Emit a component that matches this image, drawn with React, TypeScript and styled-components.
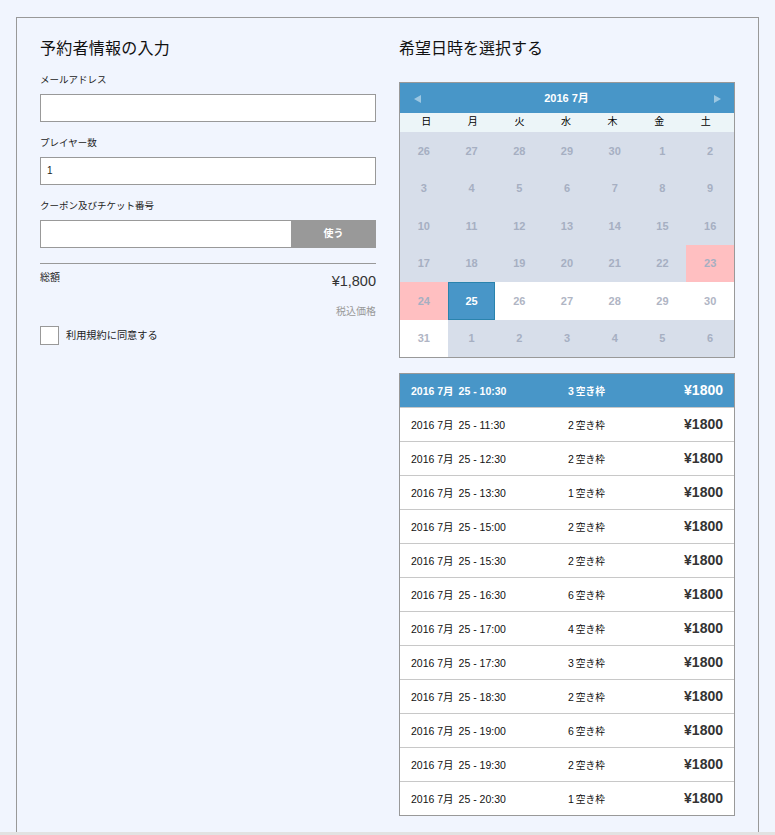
import React from "react";
import styled, { createGlobalStyle } from "styled-components";

const Global = createGlobalStyle`
  html, body { margin: 0; padding: 0; height: 835px; overflow: hidden; background: #f1f5fe; }
  body { font-family: "Liberation Sans", "Noto Sans CJK JP", sans-serif; color: #000; }
  * { box-sizing: border-box; }
`;
const Page = styled.div`
  height: 835px; display: flex; flex-direction: column; padding-top: 17px;
`;
const Frame = styled.main`
  width: 743px; height: 815px; margin-left: 16px; flex: none;
  border: 1px solid #999; border-bottom: 0;
  padding: 0 23px 0 23px;
  display: grid; grid-template-columns: 336px 336px; column-gap: 23px;
`;
const Strip = styled.div`
  height: 3px; background: #e2e2e2; flex: none;
`;
const Column = styled.section`
  display: flex; flex-direction: column; align-items: stretch;
`;
const Heading = styled.h2`
  margin: 0; font-weight: 400; font-size: 16px; line-height: 20px; padding-top: 21px; height: 64px; color: #111;
`;
const LeftHeading = styled(Heading)`
  height: 54px; letter-spacing: 0.25px;
`;
const Label = styled.label`
  display: block; font-size: 9.5px; line-height: 14px; padding-top: 1px; color: #222; height: 22px;
`;
const Field = styled.div`
  height: 28px; border: 1px solid #999; background: #fff; font-size: 10px; line-height: 26px; padding-left: 6px; margin-bottom: 13px; color: #222;
`;
const CouponRow = styled.div`
  display: flex; height: 28px; border: 1px solid #999; border-right: 0; background: #fff;
`;
const CouponInput = styled.div`
  flex: 1;
`;
const UseButton = styled.button`
  width: 85px; margin: -1px 0; border: 0; background: #999; color: #fff; font: 700 10px/28px "Liberation Sans", "Noto Sans CJK JP", sans-serif; padding: 0;
`;
const Total = styled.div`
  margin-top: 15px; border-top: 1px solid #999; display: flex; justify-content: space-between; height: 42px;
`;
const TotalLabel = styled.span`
  font-size: 10px; line-height: 14px; padding-top: 7px; color: #222;
`;
const TotalValue = styled.span`
  font-size: 14.5px; line-height: 18px; padding-top: 8px; color: #333;
`;
const Tax = styled.div`
  text-align: right; font-size: 10px; line-height: 14px; color: #999; height: 21px;
`;
const Agree = styled.div`
  display: flex; align-items: center; gap: 7px; font-size: 10.2px; color: #222;
`;
const AgreeText = styled.span`
  padding-bottom: 2px;
`;
const Check = styled.span`
  width: 19px; height: 19px; border: 1px solid #999; background: #fff; flex: none;
`;
const Calendar = styled.div`
  width: 336px; height: 276px; border: 1px solid #999; background: #fff; display: flex; flex-direction: column;
`;
const CalHead = styled.div`
  height: 30px; background: #4896c8; color: #fff; display: flex; align-items: center; justify-content: space-between; padding: 0 13px 0 14px; flex: none;
`;
const CalTitle = styled.span`
  font-weight: 700; font-size: 11px; padding-bottom: 3px; margin-right: 2px;
`;
const Arrow = styled.svg`
  width: 7px; height: 8px; fill: #9cc7e2; margin-top: 2px;
`;
const Week = styled.div`
  height: 19px; background: #ecf5f8; display: grid; grid-template-columns: repeat(7, 1fr); flex: none; padding: 0 5px 0 3px;
`;
const WeekDay = styled.span`
  font-size: 10px; line-height: 18px; text-align: center; color: #000;
`;
const Days = styled.div`
  flex: 1; display: grid; grid-template-columns: repeat(7, 1fr); grid-template-rows: repeat(6, 1fr);
`;
const Day = styled.div<{ $kind: string }>`
  display: flex; align-items: center; justify-content: center; font-size: 11px; font-weight: 700;
  color: ${p => (p.$kind === "sel" ? "#fff" : p.$kind === "on" ? "#b0b5c4" : "#a6afc2")};
  background: ${p => ({ off: "#d7deea", pink: "#ffbfc1", on: "#fff", sel: "#4896c8" } as Record<string, string>)[p.$kind]};
  ${p => (p.$kind === "sel" ? "border: 1px solid #2a83ad;" : "")}
`;
const SlotList = styled.ul`
  list-style: none; margin: 15px 0 0; padding: 0; width: 336px; border: 1px solid #999; background: #fff;
`;
const Slot = styled.li<{ $active?: boolean }>`
  height: 34px; display: grid; grid-template-columns: 157px 95px 1fr; align-items: center; padding: 0 11px;
  background: ${p => (p.$active ? "#4896c8" : "#fff")};
  color: ${p => (p.$active ? "#fff" : "#111")};
  font-weight: ${p => (p.$active ? 700 : 400)};
  font-size: 10.5px;
  & + & { border-top: 1px solid #c8c8c8; }
  &:first-child { height: 33px; }
`;
const Month = styled.span`
  margin-right: 2px;
`;
const Vacancy = styled.span`
  font-size: 9.7px; margin-left: -1px;
`;
const Price = styled.span<{ $active?: boolean }>`
  text-align: right; font-weight: 700; font-size: 14px; padding-bottom: 2px; color: ${p => (p.$active ? "#fff" : "#333")};
`;

const before = [26, 27, 28, 29, 30, 1, 2, 3, 4, 5, 6, 7, 8, 9, 10, 11, 12, 13, 14, 15, 16, 17, 18, 19, 20, 21, 22];
const days: [number, string][] = [
  ...before.map(d => [d, "off"] as [number, string]),
  [23, "pink"], [24, "pink"], [25, "sel"], [26, "on"], [27, "on"], [28, "on"], [29, "on"], [30, "on"], [31, "on"],
  [1, "off"], [2, "off"], [3, "off"], [4, "off"], [5, "off"], [6, "off"],
];
const slots: [string, number][] = [
  ["10:30", 3], ["11:30", 2], ["12:30", 2], ["13:30", 1], ["15:00", 2], ["15:30", 2], ["16:30", 6],
  ["17:00", 4], ["17:30", 3], ["18:30", 2], ["19:00", 6], ["19:30", 2], ["20:30", 1],
];

export default function App() {
  return (
    <Page>
      <Global />
      <Frame>
        <Column>
          <LeftHeading>予約者情報の入力</LeftHeading>
          <Label>メールアドレス</Label>
          <Field />
          <Label>プレイヤー数</Label>
          <Field>1</Field>
          <Label>クーポン及びチケット番号</Label>
          <CouponRow>
            <CouponInput />
            <UseButton>使う</UseButton>
          </CouponRow>
          <Total>
            <TotalLabel>総額</TotalLabel>
            <TotalValue>¥1,800</TotalValue>
          </Total>
          <Tax>税込価格</Tax>
          <Agree><Check /><AgreeText>利用規約に同意する</AgreeText></Agree>
        </Column>
        <Column>
          <Heading>希望日時を選択する</Heading>
          <Calendar>
            <CalHead>
              <Arrow viewBox="0 0 7 8"><path d="M7 0v8L0 4z" /></Arrow>
              <CalTitle>2016 7月</CalTitle>
              <Arrow viewBox="0 0 7 8"><path d="M0 0v8l7-4z" /></Arrow>
            </CalHead>
            <Week>
              {["日", "月", "火", "水", "木", "金", "土"].map(d => <WeekDay key={d}>{d}</WeekDay>)}
            </Week>
            <Days>
              {days.map(([d, k], i) => <Day key={i} $kind={k}>{d}</Day>)}
            </Days>
          </Calendar>
          <SlotList>
            {slots.map(([t, n], i) => (
              <Slot key={t} $active={i === 0}>
                <span>2016 <Month>7月</Month> 25 - {t}</span>
                <span>{n} <Vacancy>空き枠</Vacancy></span>
                <Price $active={i === 0}>¥1800</Price>
              </Slot>
            ))}
          </SlotList>
        </Column>
      </Frame>
      <Strip />
    </Page>
  );
}
